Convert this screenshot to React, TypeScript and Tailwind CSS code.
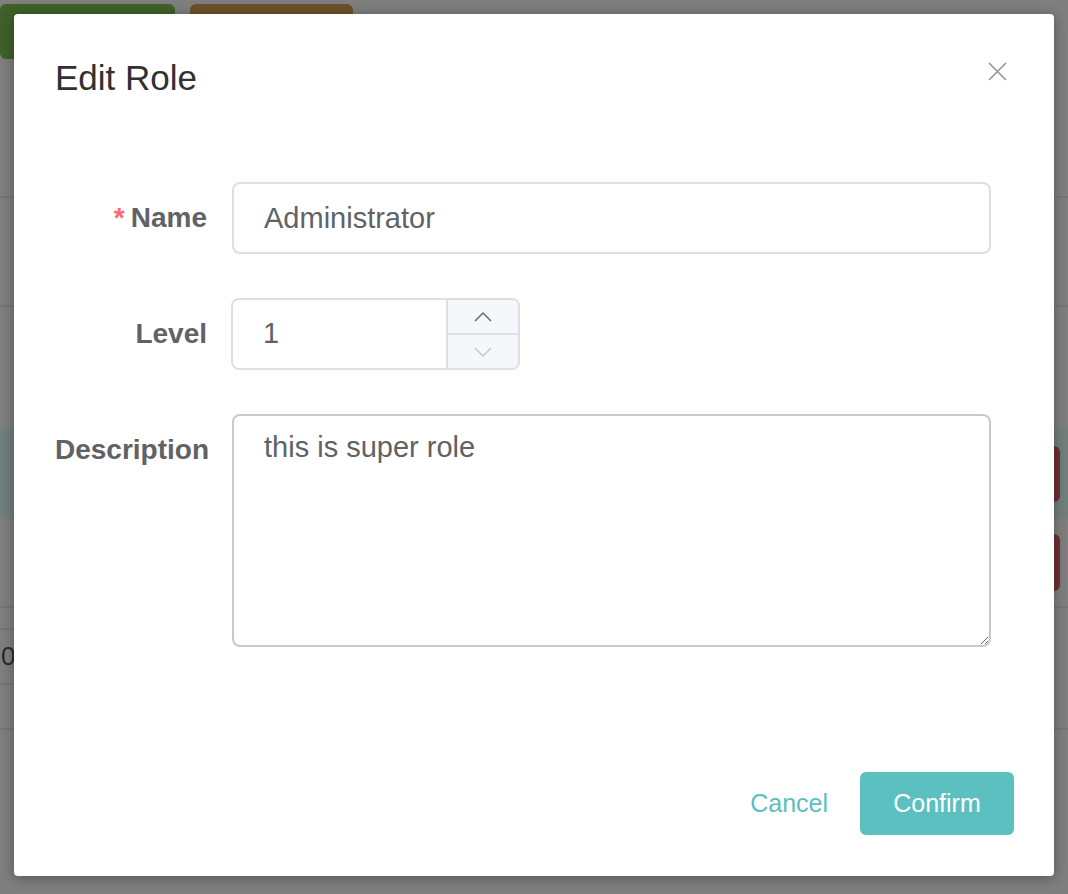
import { useState } from "react";

const Chevron = ({ dir, color }: { dir: "up" | "down"; color: string }) => (
  <svg width="18" height="10" viewBox="0 0 18 10" fill="none">
    <path
      d={dir === "up" ? "M1 9 L9 1 L17 9" : "M1 1 L9 9 L17 1"}
      stroke={color}
      strokeWidth="1.4"
    />
  </svg>
);

const BackgroundPage = () => (
  <div className="flex flex-col">
    <div className="flex pt-[4px]">
      <div className="h-[55px] w-[175px] rounded-md bg-[#80c252]" />
      <div className="ml-[15px] h-[55px] w-[163px] rounded-md bg-[#dca250]" />
    </div>
    <div className="h-[139px] border-b-2 border-[#ececec]" />
    <div className="h-[109px] border-b-2 border-[#ececec]" />
    <div className="h-[121px]" />
    <div className="flex h-[91px] items-center justify-end bg-[#e2fefa] pr-[8px]">
      <div className="h-[56px] w-[120px] rounded-md bg-[#db6664]" />
    </div>
    <div className="flex h-[89px] items-center justify-end border-b-2 border-[#ececec] pr-[8px]">
      <div className="h-[57px] w-[120px] rounded-md bg-[#db6664]" />
    </div>
    <div className="flex h-[122px] border-b-2 border-[#ececec]">
      <div className="flex w-[40px] flex-col">
        <div className="h-[22px] border-b-2 border-[#ececec]" />
        <div className="flex h-[55px] items-center border-b-2 border-[#ececec] pl-[1px] text-[26px] font-light text-[#555]">
          0
        </div>
      </div>
    </div>
  </div>
);

export default function App() {
  const [name, setName] = useState("Administrator");
  const [level] = useState(1);
  const [desc, setDesc] = useState("this is super role");

  return (
    <div className="relative h-[894px] w-full overflow-hidden bg-white font-['Liberation_Sans',Helvetica,Arial,sans-serif]">
      <BackgroundPage />
      <div className="absolute inset-0 bg-black/50" />

      <div className="absolute left-[14px] top-[14px] flex h-[862px] w-[1040px] flex-col rounded-[4px] bg-white shadow-[0_2px_14px_rgba(0,0,0,0.35)]">
        {/* header */}
        <div className="pl-[41px] pt-[44px]">
          <div className="text-[35px] leading-[40px] text-[#303133]">Edit Role</div>
        </div>
        <button className="absolute right-[47px] top-[48px] h-[19px] w-[19px]">
          <svg width="19" height="19" viewBox="0 0 19 19">
            <path d="M1 1 L18 18 M18 1 L1 18" stroke="#909399" strokeWidth="1.6" />
          </svg>
        </button>

        {/* form */}
        <div className="mt-[84px] pl-[41px] pr-[63px]">
          <div className="mb-[44px] flex">
            <label className="w-[177px] shrink-0 pr-[25px] text-right text-[28px] font-bold leading-[72px] text-[#606266]">
              <span className="mr-[6px] text-[#f56c6c]">*</span>
              Name
            </label>
            <input
              value={name}
              onChange={(e) => setName(e.target.value)}
              className="h-[72px] flex-1 rounded-[8px] border-2 border-[#dcdfe6] px-[30px] text-[29px] text-[#606266] outline-none"
            />
          </div>

          <div className="mb-[44px] flex">
            <label className="w-[177px] shrink-0 pr-[25px] text-right text-[28px] font-bold leading-[72px] text-[#606266]">
              Level
            </label>
            <div className="-ml-[1px] flex h-[72px] w-[289px] overflow-hidden rounded-[8px] border-2 border-[#dcdfe6]">
              <input
                value={level}
                readOnly
                className="min-w-0 flex-1 px-[30px] text-[29px] text-[#606266] outline-none"
              />
              <div className="flex w-[72px] flex-col border-l-2 border-[#dcdfe6] bg-[#f5f7fa]">
                <div className="flex flex-1 items-center justify-center border-b-2 border-[#dcdfe6]">
                  <Chevron dir="up" color="#606266" />
                </div>
                <div className="flex flex-1 items-center justify-center">
                  <Chevron dir="down" color="#c0c4cc" />
                </div>
              </div>
            </div>
          </div>

          <div className="flex">
            <label className="w-[177px] shrink-0 pr-[25px] text-right text-[28px] font-bold leading-[72px] text-[#606266]">
              Description
            </label>
            <textarea
              value={desc}
              onChange={(e) => setDesc(e.target.value)}
              className="h-[233px] flex-1 resize-y rounded-[8px] border-2 border-[#c6c9cf] px-[30px] py-[10px] text-[29px] leading-[42px] text-[#606266] outline-none"
            />
          </div>
        </div>

        {/* footer */}
        <div className="mt-auto flex items-center justify-end gap-[32px] pb-[41px] pr-[40px]">
          <button className="text-[25px] text-[#5bbfbf]">Cancel</button>
          <button className="h-[63px] w-[154px] rounded-[6px] bg-[#5bc0bf] text-[25px] text-white">
            Confirm
          </button>
        </div>
      </div>
    </div>
  );
}
